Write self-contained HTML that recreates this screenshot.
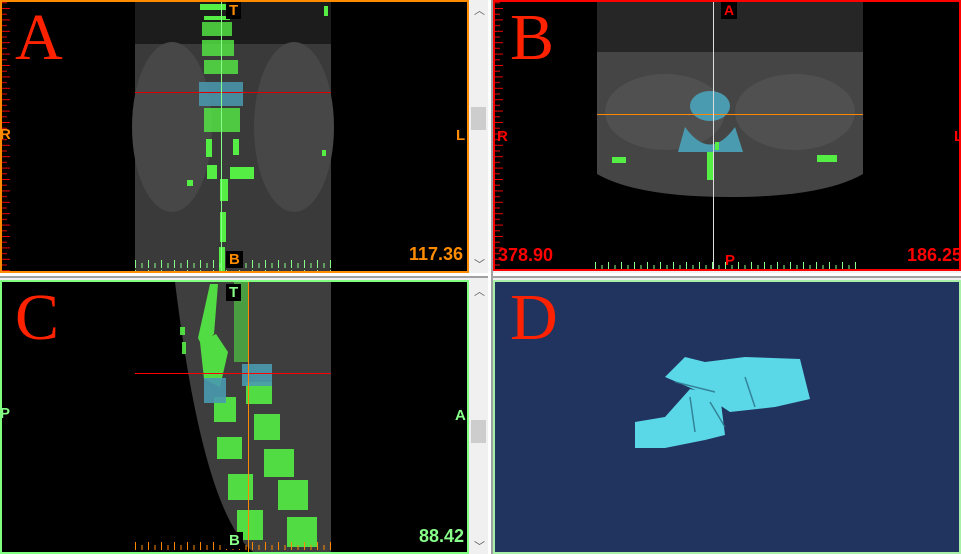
<!DOCTYPE html>
<html><head><meta charset="utf-8"><style>
body{margin:0;width:961px;height:554px;background:#f0f0f0;position:relative;overflow:hidden;font-family:"Liberation Sans",sans-serif}
.p{position:absolute;box-sizing:border-box;background:#000;overflow:hidden}
.lab{position:absolute;font-weight:bold;font-size:15px;line-height:17px}
.big{position:absolute;font-family:"Liberation Serif",serif;color:#ff2200;font-size:66px;line-height:60px}
.num{position:absolute;font-weight:bold;font-size:18px;line-height:20px}
.sb{position:absolute;width:17px;background:#f0f0f0}
.th{position:absolute;left:1px;width:15px;height:23px;background:#cdcdcd}
.ar{position:absolute;left:4px;font-size:11px;color:#606060}
</style></head><body>
<svg width="0" height="0" style="position:absolute">
<defs>
<pattern id="rt" x="0" y="6" width="12" height="11.4" patternUnits="userSpaceOnUse"><rect x="0" y="0" width="8" height="1" fill="#e00"/><rect x="0" y="5.7" width="5" height="1" fill="#e00"/></pattern>
<pattern id="gt" x="133" y="256" width="13" height="10" patternUnits="userSpaceOnUse"><rect x="0" y="2" width="1" height="8" fill="#8f8"/><rect x="6.5" y="5" width="1" height="5" fill="#8f8"/></pattern>
<pattern id="gt2" x="100" y="258" width="13" height="10" patternUnits="userSpaceOnUse"><rect x="0" y="2" width="1" height="8" fill="#8f8"/><rect x="6.5" y="5" width="1" height="5" fill="#8f8"/></pattern>
<pattern id="ot" x="133" y="258" width="13" height="10" patternUnits="userSpaceOnUse"><rect x="0" y="2" width="1" height="8" fill="#f80"/><rect x="6.5" y="5" width="1" height="5" fill="#f80"/></pattern>
</defs></svg>
<!-- Panel A -->
<div class="p" style="left:0;top:0;width:469px;height:273px;border:2px solid #ff8c00">
<svg width="465" height="269" style="position:absolute;left:0;top:0">
<rect x="0" y="0" width="8" height="269" fill="url(#rt)"/>
<rect x="133" y="0" width="196" height="269" fill="#3a3a3a"/>
<rect x="133" y="0" width="196" height="42" fill="#1c1c1c"/>
<ellipse cx="170" cy="125" rx="40" ry="85" fill="#474747"/><ellipse cx="292" cy="125" rx="40" ry="85" fill="#474747"/>
<g fill="#55ee44"><rect x="198" y="2" width="32" height="6"/><rect x="202" y="14" width="26" height="4"/><rect x="200" y="20" width="30" height="14" opacity=".8"/><rect x="200" y="38" width="32" height="16" opacity=".8"/><rect x="202" y="58" width="34" height="14" opacity=".8"/><rect x="202" y="106" width="36" height="24" opacity=".8"/><rect x="204" y="137" width="6" height="18"/><rect x="231" y="137" width="6" height="16"/><rect x="205" y="163" width="10" height="14"/><rect x="228" y="165" width="24" height="12"/><rect x="218" y="177" width="8" height="22"/><rect x="218" y="210" width="6" height="30"/><rect x="217" y="245" width="6" height="24"/><rect x="320" y="148" width="4" height="6"/><rect x="322" y="4" width="4" height="10"/><rect x="185" y="178" width="6" height="6"/></g>
<g fill="#4a9bb0" opacity=".85"><rect x="197" y="80" width="44" height="24"/></g>
<rect x="133" y="90" width="196" height="1" fill="#d00"/>
<rect x="219" y="0" width="1" height="269" fill="#8f8"/>
<rect x="133" y="256" width="196" height="13" fill="url(#gt)"/>
</svg>
<div class="big" style="left:13px;top:6px">A</div>
<div class="lab" style="left:224px;top:0;background:#000;color:#ff8c00;padding:0 3px">T</div>
<div class="lab" style="left:224px;top:249px;background:#000;color:#ff8c00;padding:0 3px">B</div>
<div class="lab" style="left:-2px;top:124px;color:#ff8c00">R</div>
<div class="lab" style="left:454px;top:125px;color:#ff8c00">L</div>
<div class="num" style="left:407px;top:242px;color:#ff8c00">117.36</div>
</div>
<div class="sb" style="left:470px;top:0;height:272px"><div class="ar" style="top:2px">︿</div><div class="th" style="top:107px"></div><div class="ar" style="top:256px">﹀</div></div>
<!-- separator -->
<div style="position:absolute;left:0;top:273px;width:961px;height:3px;background:#fff"></div>
<div style="position:absolute;left:0;top:276px;width:961px;height:2px;background:#a0a0a0"></div>
<div style="position:absolute;left:488px;top:0;width:3px;height:554px;background:#fff"></div>
<div style="position:absolute;left:491px;top:0;width:2px;height:554px;background:#a0a0a0"></div>
<!-- Panel B -->
<div class="p" style="left:493px;top:0;width:468px;height:271px;border:2px solid #f00">
<svg width="464" height="267" style="position:absolute;left:0;top:0">
<rect x="0" y="0" width="8" height="267" fill="url(#rt)"/>
<path d="M102 0h266v172q-40 23-133 23q-93 0-133-23z" fill="#454545"/>
<rect x="102" y="0" width="266" height="50" fill="#262626"/>
<ellipse cx="170" cy="110" rx="60" ry="38" fill="#505050"/><ellipse cx="300" cy="110" rx="60" ry="38" fill="#505050"/>
<ellipse cx="215" cy="104" rx="20" ry="15" fill="#4a9bb0"/>
<path d="M190 125q25 35 50 0l8 25h-65z" fill="#4a9bb0"/>
<g fill="#55ee44"><rect x="117" y="155" width="14" height="6"/><rect x="322" y="153" width="20" height="7"/><rect x="212" y="150" width="6" height="28"/><rect x="220" y="140" width="4" height="8"/></g>
<rect x="102" y="112" width="266" height="1" fill="#f80"/>
<rect x="218" y="0" width="1" height="267" fill="#ddd"/>
<rect x="100" y="258" width="266" height="9" fill="url(#gt2)"/>
</svg>
<div class="big" style="left:15px;top:6px">B</div>
<div class="lab" style="left:226px;top:0;background:#000;color:#f00;padding:0 3px;font-size:14px">A</div>
<div class="lab" style="left:230px;top:250px;color:#f00">P</div>
<div class="lab" style="left:2px;top:126px;color:#f00">R</div>
<div class="lab" style="left:459px;top:126px;color:#f00">L</div>
<div class="num" style="left:3px;top:243px;color:#f00">378.90</div>
<div class="num" style="left:412px;top:243px;color:#f00">186.25</div>
</div>
<!-- Panel C -->
<div class="p" style="left:0;top:280px;width:469px;height:274px;border:2px solid #80ff80">
<svg width="465" height="270" style="position:absolute;left:0;top:0">
<path d="M173 0h156v270h-78q-50-40-78-270z" fill="#3e3e3e"/>
<g fill="#55ee44" opacity=".9"><path d="M208 2l8 0-4 50-12 12-4-8z"/><path d="M198 60l16-8 12 18-8 35-16-8z"/><rect x="212" y="115" width="22" height="25"/><rect x="215" y="155" width="25" height="22"/><rect x="226" y="192" width="25" height="26"/><rect x="235" y="228" width="26" height="30"/><rect x="178" y="45" width="5" height="8"/><rect x="180" y="60" width="4" height="12"/><rect x="232" y="0" width="14" height="80" opacity=".6"/><rect x="244" y="100" width="26" height="22"/><rect x="252" y="132" width="26" height="26"/><rect x="262" y="167" width="30" height="28"/><rect x="276" y="198" width="30" height="30"/><rect x="285" y="235" width="30" height="30"/></g>
<g fill="#4a9bb0" opacity=".9"><rect x="202" y="96" width="22" height="25"/><rect x="240" y="82" width="30" height="22"/></g>
<rect x="133" y="91" width="196" height="1" fill="#f00"/>
<rect x="246" y="0" width="1" height="270" fill="#f80"/>
<rect x="133" y="258" width="196" height="12" fill="url(#ot)"/>
</svg>
<div class="big" style="left:13px;top:6px">C</div>
<div class="lab" style="left:224px;top:2px;background:#000;color:#8f8;padding:0 3px">T</div>
<div class="lab" style="left:224px;top:250px;background:#000;color:#8f8;padding:0 3px">B</div>
<div class="lab" style="left:-2px;top:123px;color:#8f8">P</div>
<div class="lab" style="left:453px;top:125px;color:#8f8">A</div>
<div class="num" style="left:417px;top:244px;color:#8f8">88.42</div>
</div>
<div class="sb" style="left:470px;top:280px;height:274px"><div class="ar" style="top:3px">︿</div><div class="th" style="top:140px"></div><div class="ar" style="top:258px">﹀</div></div>
<!-- Panel D -->
<div class="p" style="left:493px;top:280px;width:468px;height:274px;border:2px solid #a8f0a8;background:#21335f">
<svg width="464" height="270" style="position:absolute;left:0;top:0">
<g fill="#5ad8e8"><path d="M140 140l30-5 25-28 30 6 5 40-20 5-40 8-30 0z"/><path d="M170 95l20-20 20 5 40-5 55 2 10 40-35 8-45 5-30-20z"/></g>
<g fill="none" stroke="#2b6f85" stroke-width="1.5" opacity=".8"><path d="M180 100l40 10M215 120l15 25M250 95l10 30M195 115l5 35"/></g>
</svg>
<div class="big" style="left:15px;top:6px">D</div>
</div>
</body></html>
